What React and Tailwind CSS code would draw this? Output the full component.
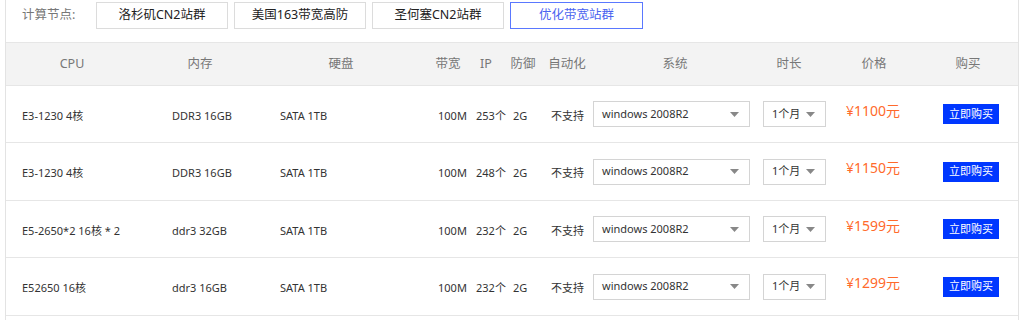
import React from "react";

const font = { fontFamily: '"Noto Sans", "Noto Sans CJK SC", sans-serif' };

const rows = [
  { cpu: "E3-1230 4核", mem: "DDR3 16GB", ip: "253个", price: "¥1100元", h: "h-[57px]" },
  { cpu: "E3-1230 4核", mem: "DDR3 16GB", ip: "248个", price: "¥1150元", h: "h-[58px]" },
  { cpu: "E5-2650*2 16核 * 2", mem: "ddr3 32GB", ip: "232个", price: "¥1599元", h: "h-[57px]" },
  { cpu: "E52650 16核", mem: "ddr3 16GB", ip: "232个", price: "¥1299元", h: "h-[58px]" },
];

const headers = [
  ["CPU", "w-[132px]"],
  ["内存", "w-[124px]"],
  ["硬盘", "w-[158px]"],
  ["带宽", "w-[56px]"],
  ["IP", "w-[20px]"],
  ["防御", "w-[54px]"],
  ["自动化", "w-[34px]"],
  ["系统", "w-[182px]"],
  ["时长", "w-[46px]"],
  ["价格", "w-[124px]"],
  ["购买", "w-[64px]"],
];

function Caret() {
  return (
    <svg width="9" height="5" viewBox="0 0 9 5" className="shrink-0">
      <path d="M0 0 L9 0 L4.5 5 Z" fill="#888" />
    </svg>
  );
}

export default function App() {
  return (
    <div className="w-[1024px] h-[320px] bg-white overflow-hidden" style={font}>
      <div className="ml-[5px] w-[1014px] border-x border-[#e3e3e3] h-[320px]">
        <div className="h-[42px] flex items-start pt-[2px]">
          <div className="w-[90px] pl-[16px] h-[26px] flex items-center text-[12.5px] text-[#777]">计算节点:</div>
          <div className="flex gap-[6px]">
            {["洛杉矶CN2站群", "美国163带宽高防", "圣何塞CN2站群"].map((t) => (
              <div key={t} className="w-[132px] h-[27px] border border-[#dcdcdc] flex items-center justify-center text-[12.5px] text-[#222]">{t}</div>
            ))}
            <div className="w-[133px] h-[27px] border border-[#5a78ff] flex items-center justify-center text-[12.5px] text-[#4a63f0]">优化带宽站群</div>
          </div>
        </div>
        <div className="h-[44px] bg-[#f3f3f3] border-y border-[#e6e6e6] flex items-center">
          {headers.map(([t, w]) => (
            <div key={t} className={`${w} flex justify-center whitespace-nowrap text-[12.5px] text-[#777]`}>{t}</div>
          ))}
        </div>
        {rows.map((r, i) => (
          <div key={i} className={`${r.h} border-b border-[#e6e6e6] flex items-center text-[11px] text-[#333] whitespace-nowrap`}>
            <div className="w-[166px] pl-[16px] pt-[4px]">{r.cpu}</div>
            <div className="w-[108px] pt-[4px]">{r.mem}</div>
            <div className="w-[158px] pt-[4px]">SATA 1TB</div>
            <div className="w-[38px] pt-[4px]">100M</div>
            <div className="w-[37px] pt-[4px]">{r.ip}</div>
            <div className="w-[38px] pt-[4px]">2G</div>
            <div className="w-[42px] pt-[4px]">不支持</div>
            <div className="w-[170px] flex">
              <div className="w-[157px] h-[26px] border border-[#d4d4d4] flex items-center justify-between pl-[8px] pr-[10px] text-[#333] text-[11px]">
                <span>windows 2008R2</span>
                <Caret />
              </div>
            </div>
            <div className="w-[83px] flex">
              <div className="w-[63px] h-[26px] border border-[#d4d4d4] flex items-center justify-between pl-[8px] pr-[10px] text-[#333] text-[11px]">
                <span>1个月</span>
                <Caret />
              </div>
            </div>
            <div className="w-[97px] text-[14px] text-[#ff6a2b] mb-[8px]">{r.price}</div>
            <div className="w-[56px] h-[20px] bg-[#0037ff] text-white text-[11px] flex items-center justify-center">立即购买</div>
          </div>
        ))}
      </div>
    </div>
  );
}
